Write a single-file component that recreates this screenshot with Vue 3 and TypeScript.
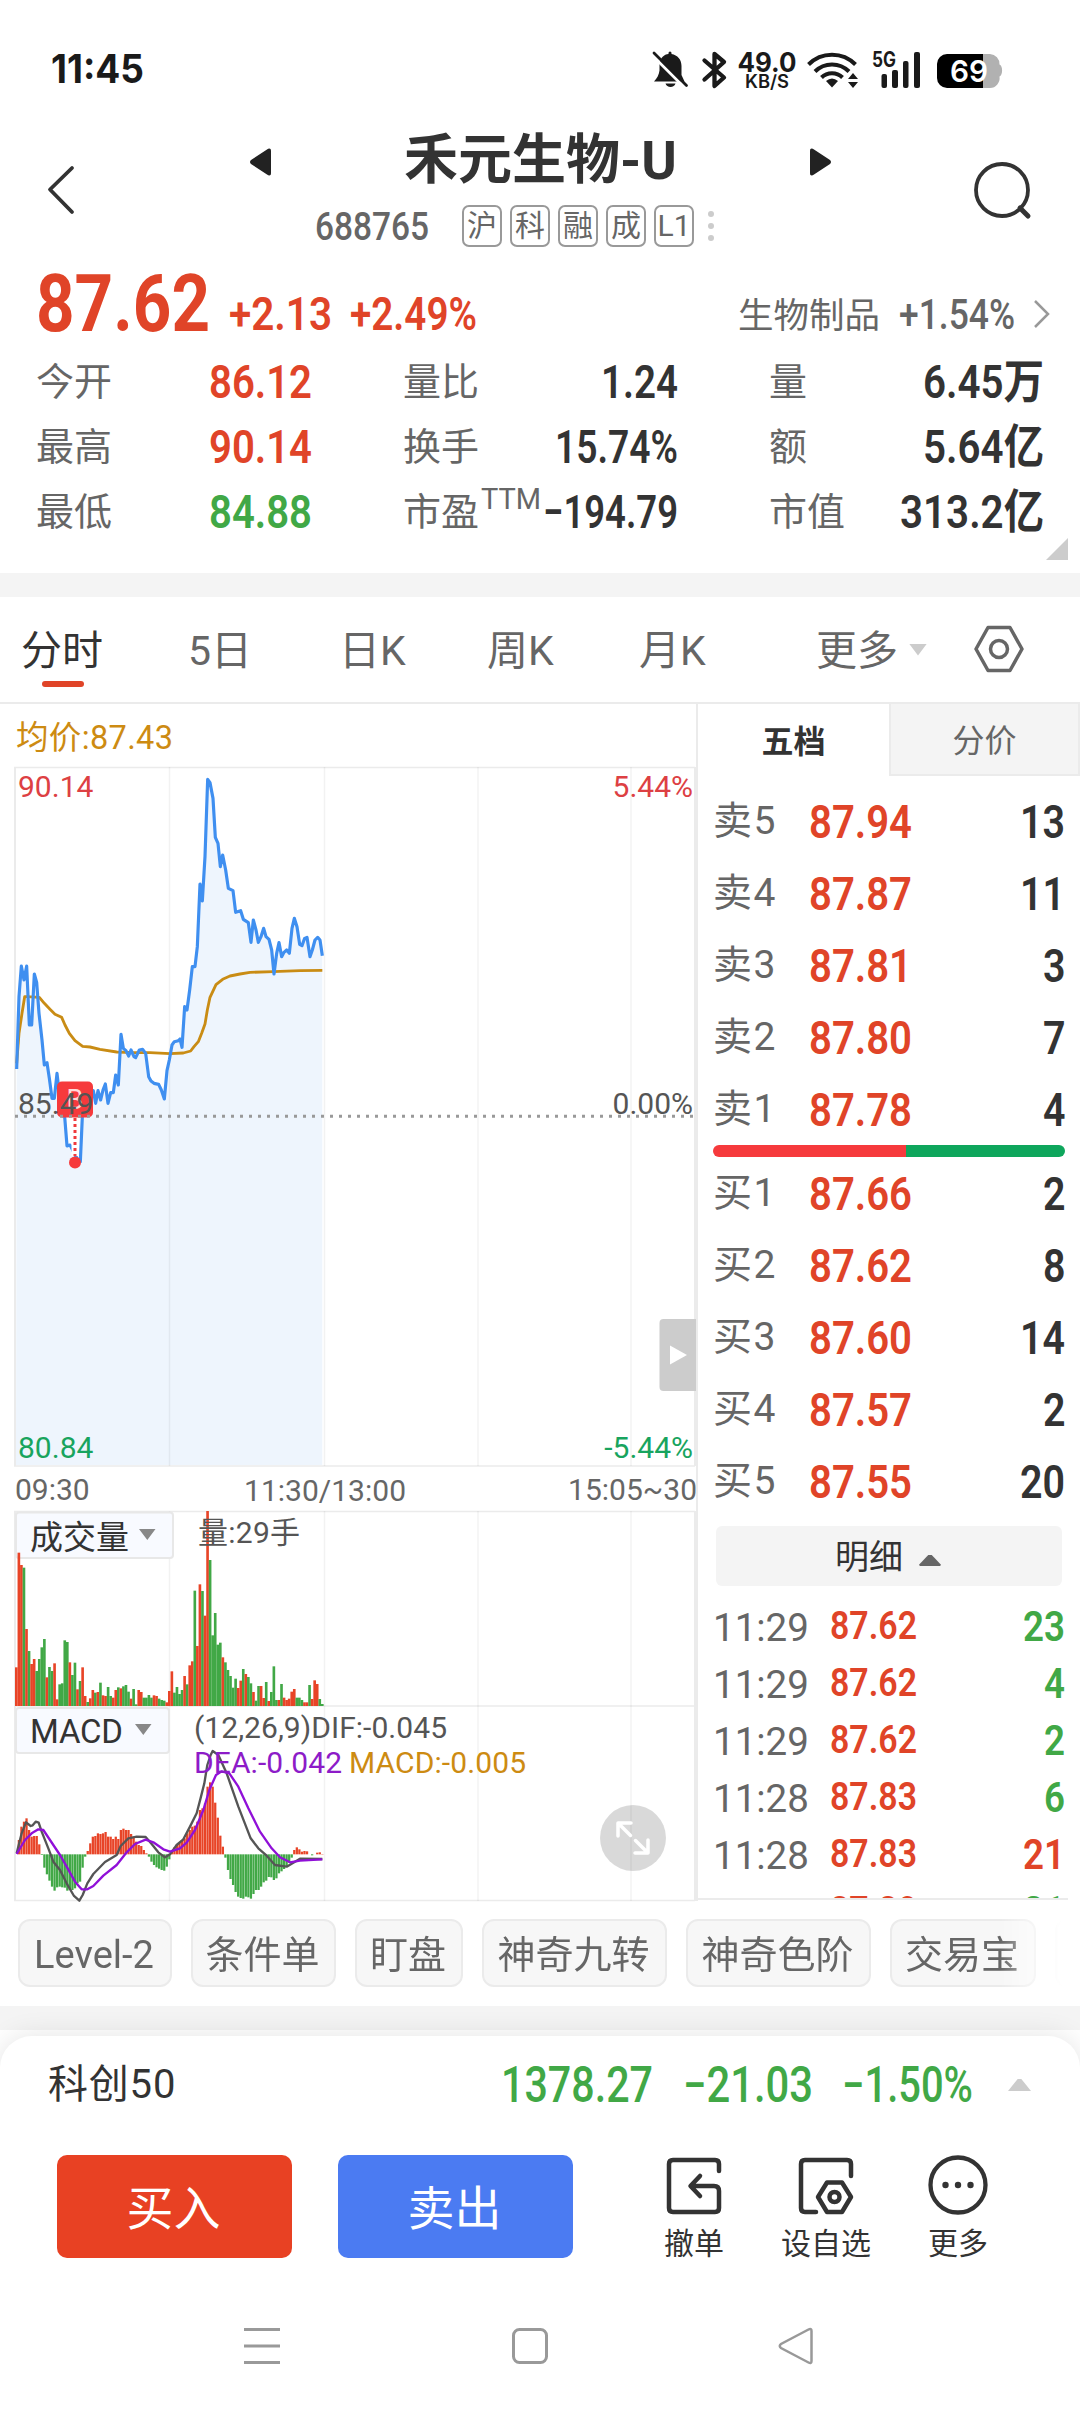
<script setup lang="ts">
import { defineComponent, h } from 'vue'

// Condensed figure: the text is fitted to a fixed width, its box is exactly one cap-height tall.
const Fig = defineComponent({
  props: {
    t: { type: String, required: true },
    w: { type: Number, required: true },
    cap: { type: Number, default: 33 },
    weight: { type: Number, default: 600 },
  },
  setup(p) {
    return () =>
      h('svg', { width: p.w, height: p.cap, style: 'overflow:visible;flex:none;display:block' }, [
        h('text', {
          x: 0, y: p.cap, fill: 'currentColor', textLength: p.w, lengthAdjust: 'spacingAndGlyphs',
          'font-size': p.cap / 0.711, 'font-weight': p.weight,
        }, p.t),
      ])
  },
})

const tags = ['沪', '科', '融', '成', 'L1']

interface Stat { k: string; v: string; w: number; c?: string; sup?: string }
const stats: Stat[] = [
  { k: '今开', v: '86.12', w: 103, c: 'up' }, { k: '量比', v: '1.24', w: 77 }, { k: '量', v: '6.45万', w: 121 },
  { k: '最高', v: '90.14', w: 103, c: 'up' }, { k: '换手', v: '15.74%', w: 123 }, { k: '额', v: '5.64亿', w: 121 },
  { k: '最低', v: '84.88', w: 103, c: 'down' }, { k: '市盈', v: '−194.79', w: 135, sup: 'TTM' }, { k: '市值', v: '313.2亿', w: 144 },
]

const tabs = ['分时', '5日', '日K', '周K', '月K']

const asks = [['卖5', '87.94', '13'], ['卖4', '87.87', '11'], ['卖3', '87.81', '3'], ['卖2', '87.80', '7'], ['卖1', '87.78', '4']]
const bids = [['买1', '87.66', '2'], ['买2', '87.62', '8'], ['买3', '87.60', '14'], ['买4', '87.57', '2'], ['买5', '87.55', '20']]
const trades = [
  ['11:29', '87.62', '23', 'down'], ['11:29', '87.62', '4', 'down'], ['11:29', '87.62', '2', 'down'],
  ['11:28', '87.83', '6', 'down'], ['11:28', '87.83', '21', 'up'], ['11:28', '87.80', '21', 'down'],
]
const chips = [['Level-2', 154], ['条件单', 145], ['盯盘', 108], ['神奇九转', 185], ['神奇色阶', 185], ['交易宝', 146], ['', 108]] as [string, number][]

// Chart series are kept on a grid of three units per pixel.
const price = '50,957 57,740 64,648 72,690 80,648 88,825 95,825 103,672 110,697 117,790 126,870 133,945 141,938 148,985 156,1045 163,1045 171,970 178,1030 186,1040 194,1100 201,1188 210,1185 218,1200 225,1215 238,1235 241,1235 247,1100 255,1060 263,1070 272,1040 280,1022 287,1060 294,1022 302,1050 309,1020 316,1002 324,1060 332,1028 340,1028 347,975 355,1005 363,853 370,895 378,902 386,918 393,900 402,920 407,923 418,900 428,898 437,910 446,980 453,993 462,1000 476,1003 484,1020 493,1047 501,962 508,930 516,885 523,875 535,872 540,867 546,892 554,770 561,780 569,720 577,650 585,650 592,590 600,402 607,453 615,320 623,88 630,98 639,145 646,262 654,280 661,350 668,315 677,360 685,415 699,422 707,487 722,482 730,508 745,518 753,577 760,510 768,540 775,577 783,560 791,535 798,560 807,568 815,600 822,672 830,610 837,578 845,620 852,607 860,600 868,610 876,535 883,505 891,530 899,583 906,587 914,565 921,562 930,620 937,600 945,570 953,562 960,570 967,617'
const avg = '50,940 57,850 66,790 74,740 80,740 118,742 133,760 150,778 165,793 185,802 195,825 208,850 225,872 248,889 270,891 300,898 350,906 400,908 450,908 510,911 550,909 572,903 582,890 595,875 605,850 615,822 622,780 630,742 648,704 668,688 690,678 720,672 750,667 820,665 900,662 967,661'
const dif = 'M50,1240 L65,1180 L78,1147 L92,1158 L98,1156 L107,1145 L116,1148 L125,1175 L145,1225 L160,1265 L180,1290 L200,1330 L222,1368 L238,1382 L248,1365 L262,1330 L280,1302 L315,1266 L350,1245 L362,1218 L385,1195 L410,1190 L437,1191 L455,1212 L475,1237 L495,1252 L510,1243 L530,1215 L550,1198 L570,1160 L590,1120 L603,1070 L613,1030 L622,975 L632,945 L638,933 L655,945 L680,1000 L715,1100 L752,1195 L775,1225 L800,1247 L825,1275 L860,1280 L880,1268 L900,1256 L967,1257'
const dea = 'M50,1242 L75,1200 L95,1180 L115,1168 L130,1170 L150,1200 L180,1245 L200,1280 L225,1325 L245,1348 L262,1348 L280,1338 L310,1307 L350,1275 L380,1237 L405,1212 L437,1199 L460,1207 L490,1228 L510,1235 L540,1225 L560,1208 L585,1170 L610,1110 L628,1050 L648,1005 L665,994 L688,1000 L715,1040 L745,1105 L780,1175 L815,1225 L840,1252 L870,1267 L900,1262 L967,1258'

const volRaw = 'r682 r338 r375 g383 r567 g633 r672 r657 g693 g657 g622 g597 r712 g681 g693 r670 r778 g733 g730 g601 g606 r667 g705 g668 r748 g723 r682 r768 g786 r775 r750 g758 r756 g728 r766 r768 g741 g768 r773 r750 g742 r745 g739 g735 g755 r776 g747 g793 r750 r756 g773 g773 g765 g773 r766 r768 g776 g780 g782 r787 r753 r694 g758 g741 g762 g750 r708 g733 r676 r664 g452 r618 r433 g453 r527 r213 g360 g586 g519 g614 g608 r652 g667 g690 g708 g743 g716 r744 r722 g687 r702 g711 g730 r756 g782 g738 r738 r774 g726 r783 g756 g679 g780 r780 g732 r773 r780 r776 r755 r747 g773 g773 g780 r787 r787 g735 r777 r721 r732 g777 g792'
const vol = volRaw.split(' ').map((s, i) => ({ x: 45 + i * 7.65, y: Number(s.slice(1)), up: s[0] === 'r' }))

const macdTops = [1243, 1200, 1160, 1145, 1135, 1170, 1190, 1188, 1188, 1213, 1245, 1283, 1303, 1322, 1340, 1352, 1342, 1340, 1342, 1343, 1352, 1350, 1350, 1345, 1330, 1325, 1283, 1250, 1233, 1210, 1190, 1188, 1180, 1182, 1180, 1176, 1190, 1190, 1197, 1190, 1197, 1170, 1166, 1170, 1170, 1182, 1190, 1205, 1215, 1218, 1230, 1240, 1250, 1265, 1275, 1282, 1286, 1290, 1292, 1280, 1258, 1235, 1222, 1213, 1208, 1200, 1195, 1180, 1170, 1160, 1157, 1145, 1110, 1105, 1090, 1040, 1027, 1040, 1088, 1133, 1187, 1220, 1253, 1290, 1317, 1335, 1356, 1370, 1374, 1376, 1370, 1372, 1376, 1362, 1350, 1350, 1340, 1327, 1322, 1311, 1312, 1320, 1315, 1300, 1294, 1287, 1280, 1268, 1253, 1230, 1222, 1228, 1235, 1233, 1234, 1243, 1246, 1243, 1238, 1237, 1242]
const macd = macdTops.map((t, i) => ({ x: 45.6 + i * 7.65, y: Math.min(t, 1243), hgt: Math.abs(t - 1243), up: t < 1243 }))
const vlines = [169.5, 324.5, 478, 631]
</script>

<template>
  <div class="screen">
    <div class="status">
      <Fig class="clock" t="11:45" :w="93" :cap="28" :weight="700" />
      <svg class="sys" width="380" height="60" viewBox="640 40 380 60">
        <g fill="#1a1a1a">
          <path d="M659.500 64C660.500 57.500 664 54.500 668.500 54V53a1.500 1.500 0 0 1 3 0v1c6 1 10 5.500 10 12v9l3 6.500H654c3-3 5-7 5.500-11z" />
          <path d="M665.500 83.500h10c-1 4.500-9 4.500-10 0z" />
        </g>
        <path d="M651.500 54.500L684.500 87.500" stroke="#fff" stroke-width="3" />
        <path d="M654 53L686.500 85.500" stroke="#1a1a1a" stroke-width="2.800" stroke-linecap="round" />
        <path d="M704.500 60.500l19.500 17-9.500 8.500v-32l9.500 8-19.500 17.500" fill="none" stroke="#1a1a1a" stroke-width="4.300" stroke-linejoin="round" stroke-linecap="round" />
        <g fill="#1a1a1a" font-family="Inter, sans-serif" font-weight="700">
          <text x="737.500" y="71.500" font-size="27" textLength="59" lengthAdjust="spacingAndGlyphs">49.0</text>
          <text x="745" y="87.500" font-size="18" font-weight="600" textLength="44" lengthAdjust="spacingAndGlyphs">KB/S</text>
          <text x="872" y="66.500" font-size="21" textLength="24" lengthAdjust="spacingAndGlyphs">5G</text>
        </g>
        <g fill="none" stroke="#1a1a1a" stroke-width="4">
          <path d="M808.500 64.500a33 33 0 0 1 47 0" /><path d="M815 71.500a24 24 0 0 1 34 0" /><path d="M821.500 77.500a15 15 0 0 1 21 0" />
        </g>
        <path d="M832 87.500l-6-6.500q6-5 12 0z" fill="#1a1a1a" />
        <path d="M853 73l5 6h-10zM853 88l5-6h-10z" fill="#1a1a1a" />
        <g fill="#1a1a1a">
          <rect x="881.500" y="74" width="5.500" height="14" rx="2" /><rect x="892" y="70" width="6" height="18" rx="2" />
          <rect x="903" y="61" width="5.500" height="27" rx="2" /><rect x="914" y="52" width="6" height="36" rx="2" />
        </g>
        <path d="M983 54h7a10 10 0 0 1 9.500 10.500c3.500 1 3.500 11 0 12A10 10 0 0 1 990 88h-7z" fill="#b1b1b1" />
        <path d="M983 54h-36a10 10 0 0 0-10 10v14a10 10 0 0 0 10 10h36z" fill="#000" />
        <text x="950" y="82" fill="#fff" font-family="Inter, sans-serif" font-weight="600" font-size="30" textLength="38" lengthAdjust="spacingAndGlyphs">69</text>
      </svg>
    </div>

    <header class="head">
      <svg class="back" width="32" height="54" viewBox="0 0 32 54"><path d="M28 5L6 26.500L28 49" fill="none" stroke="#333" stroke-width="3.800" stroke-linejoin="round" stroke-linecap="round" /></svg>
      <div class="names">
        <div class="title-row">
          <svg width="22" height="28" viewBox="0 0 22 28"><path d="M22 3v22c0 3-2 3-4 1.500L2 16q-2-2 0-4L18 1.500c2-1.500 4-1.500 4 1.500z" fill="#222" /></svg>
          <h1>禾元生物-U</h1>
          <svg width="22" height="28" viewBox="0 0 22 28"><path d="M0 3v22c0 3 2 3 4 1.500L20 16q2-2 0-4L4 1.500c-2-1.500-4-1.500-4 1.500z" fill="#222" /></svg>
        </div>
        <div class="code-row">
          <Fig t="688765" :w="114" :cap="27.5" :weight="500" />
          <div class="tags"><span v-for="t in tags" :key="t">{{ t }}</span></div>
          <i class="dots"><b /><b /><b /></i>
        </div>
      </div>
      <svg class="search" width="62" height="62" viewBox="0 0 62 62" fill="none" stroke="#333"><circle cx="30" cy="30" r="26" stroke-width="3.800" /><path d="M48 48l8 8" stroke-width="5" stroke-linecap="round" /></svg>
    </header>

    <section class="quote">
      <div class="price-row">
        <Fig class="up" t="87.62" :w="174" :cap="57" :weight="700" />
        <Fig class="up chg" t="+2.13" :w="103" :cap="33" />
        <Fig class="up pct" t="+2.49%" :w="127" :cap="33" />
        <span class="sector">生物制品</span>
        <Fig class="sector-pct" t="+1.54%" :w="116" :cap="30" :weight="500" />
        <svg width="18" height="28" viewBox="0 0 18 28"><path d="M2 1l13 13L2 27" fill="none" stroke="#999" stroke-width="2.500" /></svg>
      </div>
      <div class="stats">
        <div v-for="s in stats" :key="s.k" class="stat">
          <span class="k">{{ s.k }}<sup v-if="s.sup">{{ s.sup }}</sup></span>
          <Fig :class="s.c" :t="s.v" :w="s.w" />
        </div>
      </div>
      <i class="corner" />
    </section>

    <nav class="tabs">
      <span v-for="(t, i) in tabs" :key="t" :class="{ on: i === 0 }">{{ t }}</span>
      <span class="more">更多</span>
      <i class="tri-down" />
      <svg width="50" height="48" viewBox="0 0 50 48" fill="none" stroke="#666" stroke-width="3.500" stroke-linejoin="round"><path d="M14 2.500h22L48 24L36 45.500H14L2 24z" /><circle cx="25" cy="24" r="8.500" /></svg>
    </nav>

    <main class="market">
      <div class="chart">
        <svg width="696" height="1198" viewBox="0 704 696 1198">
          <text x="16" y="748.500" font-size="32.500" fill="#cd8b12" textLength="157">均价:87.43</text>
          <g transform="translate(0 750) scale(.33333)">
            <polygon :points="`48,2145 ${price} 967,2145`" fill="#eef5fd" />
          </g>
          <g stroke="#ebebeb" stroke-width="2" fill="none">
            <path d="M14 767.500H695M14 1466H695M14 1511.500H695M14 1706H695M14 1900.500H695" stroke-width="1.500" />
            <path d="M15 767V1466M15 1511V1901M695 767V1466M695 1511V1901" />
            <path v-for="x in vlines" :key="x" :d="`M${x} 767V1466M${x} 1511V1901`" stroke="#000" stroke-opacity=".05" stroke-width="1.500" />
          </g>
          <g transform="translate(0 750) scale(.33333)" fill="none" stroke-linejoin="round">
            <polyline :points="avg" stroke="#c98c14" stroke-width="8.500" />
            <polyline :points="price" stroke="#3f8ff0" stroke-width="9.500" />
          </g>
          <rect x="57" y="1081.500" width="36" height="36" rx="5" fill="#f63a3c" />
          <text x="75" y="1109" font-size="27" fill="#ffd9d9" text-anchor="middle">B</text>
          <path d="M75 1118V1156" stroke="#fff" stroke-width="7" /><path d="M75 1118V1156" stroke="#f03a3c" stroke-width="3" stroke-dasharray="3 3" />
          <circle cx="75" cy="1162.500" r="6" fill="#f63a3c" />
          <path d="M15 1116.300H693" stroke="#999" stroke-width="3" stroke-dasharray="3 6" />
          <g font-size="30">
            <g fill="#dd4043"><text x="18" y="797">90.14</text><text x="693" y="797" text-anchor="end">5.44%</text></g>
            <g fill="#555"><text x="18" y="1114">85.49</text><text x="693" y="1114" text-anchor="end">0.00%</text></g>
            <g fill="#18a45e"><text x="18" y="1457.500">80.84</text><text x="693" y="1457.500" text-anchor="end">-5.44%</text></g>
            <g fill="#666"><text x="15" y="1500">09:30</text><text x="244" y="1501" textLength="162">11:30/13:00</text><text x="697" y="1500" text-anchor="end" textLength="129">15:05~30</text></g>
          </g>
          <path d="M659.500 1323a4 4 0 0 1 4-4H696v72h-32.500a4 4 0 0 1-4-4z" fill="#ccc" />
          <path d="M670 1345.500v19l17-9.500z" fill="#fff" />

          <g stroke="#e8e8e8" stroke-width="2" fill="#f8faff"><rect x="16" y="1512.500" width="157" height="45.500" rx="3" /><rect x="16" y="1708" width="153" height="45" rx="3" /></g>
          <path d="M139 1529h16.500l-8.200 11zM135 1724h16.500l-8.200 11z" fill="#888" />
          <text x="30" y="1549" font-size="33" fill="#333">成交量</text>
          <text x="30" y="1743" font-size="33" fill="#333" textLength="93">MACD</text>
          <g transform="translate(0 1440) scale(.33333)">
            <rect v-for="(b, i) in vol" :key="'v' + i" :x="b.x" :y="b.y" width="7.900" :height="798 - b.y" :fill="b.up ? '#e84427' : '#41a846'" />
            <rect v-for="(b, i) in macd" :key="'m' + i" :x="b.x" :y="b.y" width="6.800" :height="b.hgt" :fill="b.up ? '#e84427' : '#41a846'" />
            <path :d="dif" fill="none" stroke="#555" stroke-width="7" stroke-linejoin="round" />
            <path :d="dea" fill="none" stroke="#9010d8" stroke-width="7" stroke-linejoin="round" />
          </g>
          <g font-size="30">
            <text x="198" y="1543" fill="#555" textLength="102">量:29手</text>
            <text x="194" y="1737.700" fill="#555" textLength="253">(12,26,9)DIF:-0.045</text>
            <text x="194" y="1772.700" fill="#8d1bc8" textLength="148">DEA:-0.042</text>
            <text x="349" y="1772.700" fill="#cd8b12" textLength="177">MACD:-0.005</text>
          </g>
          <circle cx="633" cy="1838" r="33" fill="#000" fill-opacity=".15" />
          <path d="M631 1823h-13v13M618.500 1823.500l12 12M635 1853h13v-13M647.500 1852.500l-12-12" fill="none" stroke="#fff" stroke-width="3.500" stroke-linecap="round" stroke-linejoin="round" />
        </svg>
      </div>

      <aside class="book">
        <div class="book-tabs"><b>五档</b><span>分价</span></div>
        <div class="levels">
          <div v-for="r in asks" :key="r[0]" class="lv"><span>{{ r[0] }}</span><Fig class="up" :t="r[1]" :w="103" /><Fig class="q" :t="r[2]" :w="r[2].length * 22.500" /></div>
        </div>
        <div class="ratio"><i /><i /></div>
        <div class="levels">
          <div v-for="r in bids" :key="r[0]" class="lv"><span>{{ r[0] }}</span><Fig class="up" :t="r[1]" :w="103" /><Fig class="q" :t="r[2]" :w="r[2].length * 22.500" /></div>
        </div>
        <div class="detail">明细<i /></div>
        <div class="trades">
          <div v-for="(r, i) in trades" :key="i" class="tr"><span>{{ r[0] }}</span><Fig class="up" :t="r[1]" :w="87" :cap="28" /><Fig class="q" :class="r[3]" :t="r[2]" :w="r[2].length * 21" :cap="30" /></div>
        </div>
      </aside>
    </main>

    <div class="chips">
      <span v-for="c in chips" :key="c[0]" :style="{ width: c[1] + 'px' }">{{ c[0] }}</span>
    </div>
    <div class="band" />

    <footer class="sheet">
      <div class="index">
        <span>科创50</span>
        <Fig t="1378.27" :w="152" :cap="35" :weight="500" /><Fig class="i2" t="−21.03" :w="130" :cap="35" :weight="500" /><Fig class="i3" t="−1.50%" :w="131" :cap="35" :weight="500" />
        <i />
      </div>
      <div class="actions">
        <button class="buy">买入</button>
        <button class="sell">卖出</button>
        <div class="act a1">
          <svg width="60" height="60" viewBox="0 0 60 60" fill="none" stroke="#333" stroke-width="4.500" stroke-linecap="round" stroke-linejoin="round"><path d="M55 16V9q0-4-4-4H9q-4 0-4 4v44q0 4 4 4h42q4 0 4-4V36q0-5-5-5H27M36 21L26.500 31L36 41" /></svg>
          <span>撤单</span>
        </div>
        <div class="act a2">
          <svg width="60" height="60" viewBox="0 0 60 60" fill="none" stroke="#333" stroke-width="4.500" stroke-linecap="round" stroke-linejoin="round"><path d="M55 21V9q0-4-4-4H9q-4 0-4 4v44q0 4 4 4h11M31 27.500h15l9 14.500-9 15H31l-9-15z" /><circle cx="38.500" cy="42" r="5" /></svg>
          <span>设自选</span>
        </div>
        <div class="act a3">
          <svg width="60" height="60" viewBox="0 0 60 60"><circle cx="30" cy="30" r="27.500" fill="none" stroke="#333" stroke-width="4.300" /><g fill="#333"><circle cx="17.500" cy="30" r="3.200" /><circle cx="30" cy="30" r="3.200" /><circle cx="42.500" cy="30" r="3.200" /></g></svg>
          <span>更多</span>
        </div>
      </div>
      <div class="sysnav">
        <svg width="38" height="38" viewBox="0 0 38 38" stroke="#999" stroke-width="3"><path d="M1 2.500h36M1 19h36M1 35.500h36" /></svg>
        <svg width="38" height="38" viewBox="0 0 38 38"><rect x="2.500" y="2.500" width="33" height="33" rx="6" fill="none" stroke="#999" stroke-width="3" /></svg>
        <svg width="36" height="38" viewBox="0 0 36 38"><path d="M33.500 4v30q0 3-3 1.500L3 21q-2.500-2 0-4L30.500 2.500q3-1.500 3 1.500z" fill="none" stroke="#999" stroke-width="2.500" /></svg>
      </div>
    </footer>
  </div>
</template>

<style>
body { background: #fff; }
</style>

<style scoped>
* { box-sizing: border-box; }
.screen { width: 1080px; height: 2412px; overflow: hidden; background: #fff; color: #333; font-family: Roboto, "Noto Sans CJK SC", sans-serif; display: flex; flex-direction: column; }
.screen > * { flex: none; }
svg { flex: none; display: block; }
.up { color: #e04428; }
.down { color: #41a846; }

.status { height: 100px; padding: 40px 0 0 51px; display: flex; }
.clock { font-family: Inter, sans-serif; color: #1a1a1a; margin-top: 15px; }
.sys { margin-left: 496px; }

.head { height: 150px; display: flex; }
.back { margin: 63px 0 0 44px; }
.names { width: 583px; margin-left: 173px; }
.title-row { height: 100px; padding-top: 20px; display: flex; justify-content: space-between; }
.title-row svg { margin-top: 28px; }
.title-row h1 { margin: 0; font-size: 54px; line-height: 82px; font-weight: 700; white-space: nowrap; }
.code-row { height: 50px; display: flex; align-items: center; padding: 1px 0 0 66px; color: #666; }
.tags { display: flex; gap: 8px; margin-left: 33px; }
.tags span { width: 40px; height: 42px; border: 2px solid #999; border-radius: 7px; font-size: 30px; line-height: 38px; display: flex; justify-content: center; }
.dots { display: flex; flex-direction: column; gap: 6px; margin-left: 14px; }
.dots b { width: 6px; height: 6px; border-radius: 3px; background: #ccc; }
.search { margin: 60px 0 0 140px; }

.quote { height: 347px; position: relative; border-bottom: 24px solid #f4f4f4; }
.price-row { height: 81px; padding-left: 36px; display: flex; align-items: flex-end; }
.chg { margin: 0 0 1.5px 19px; }
.pct { margin: 0 0 1.5px 18px; }
.sector { margin-left: 261px; width: 142px; font-size: 35.500px; line-height: 36px; margin-bottom: -3px; color: #666; white-space: nowrap; }
.sector-pct { color: #666; margin: 0 0 2px 19px; }
.price-row > svg:last-child { margin: 0 0 3px 18px; }
.stats { padding: 18px 0 0 36px; display: grid; grid-template-columns: 276px 366px 366px; grid-auto-rows: 65px; }
.stat { display: flex; align-items: center; justify-content: space-between; }
.stat > svg { margin-top: -1px; }
.stat:nth-child(3n+2) { padding: 0 0 0 91px; }
.stat:nth-child(3n) { padding: 0 0 0 91px; }
.k { font-size: 38px; line-height: 50px; color: #666; white-space: nowrap; display: flex; }
.k sup { font-size: 29px; line-height: 28px; margin-top: -2px; margin-left: 2px; width: 0; vertical-align: baseline; }
.corner { position: absolute; right: 12px; bottom: 13px; width: 22px; height: 22px; background: #ccc; clip-path: polygon(100% 0, 100% 100%, 0 100%); }

.tabs { height: 107px; border-bottom: 2px solid #ebebeb; display: flex; align-items: center; color: #666; font-size: 41px; padding-left: 21px; }
.tabs span { height: 105px; line-height: 109px; white-space: nowrap; position: relative; }
.tabs span:nth-child(1) { width: 167px; color: #333; }
.tabs span:nth-child(2) { width: 151px; }
.tabs span:nth-child(3) { width: 148px; }
.tabs span:nth-child(4) { width: 152px; }
.tabs span:nth-child(5) { width: 177px; }
.tabs .on::after { content: ""; position: absolute; left: 21px; top: 84px; width: 42px; height: 6px; border-radius: 3px; background: #e04428; }
.tri-down { width: 18px; height: 12px; margin-left: 11px; background: #ccc; clip-path: polygon(0 0, 100% 0, 50% 100%); }
.tabs svg { margin: -1px 0 0 47px; }

.market { height: 1197px; display: flex; }
.chart { width: 696px; height: 1197px; }
.book { width: 384px; height: 1197px; border-left: 2px solid #ebebeb; }
.book-tabs { height: 73px; display: flex; font-size: 32px; }
.book-tabs b, .book-tabs span { width: 191px; height: 72px; line-height: 77px; text-align: center; }
.book-tabs span { background: #f4f4f4; border: 2px solid #ebebeb; border-top: 0; line-height: 75px; color: #666; }
.levels { padding: 8px 0 0 15px; }
.ratio + .levels { padding-top: 0; }
.lv { height: 72px; display: flex; align-items: center; width: 352px; font-size: 39px; color: #666; }
.lv span { width: 96px; line-height: 50px; letter-spacing: 1.500px; }
.lv .up { color: #e04428; }
.q { margin-left: auto; }
.lv .q { color: #333; }
.ratio { height: 12px; width: 352px; margin: 0 0 0 15px; border-radius: 6px; overflow: hidden; display: flex; }
.ratio i { width: 193px; background: #f63a3c; }
.ratio i + i { width: 159px; background: #0ea65c; }
.detail { width: 346px; height: 60px; margin: 9px 0 0 18px; background: #f4f4f4; border-radius: 6px; display: flex; align-items: center; padding: 2px 0 0 119px; font-size: 34px; line-height: 58px; }
.detail i { width: 22px; height: 12px; margin: 6px 0 0 16px; background: #666; clip-path: polygon(42% 8%, 58% 8%, 100% 90%, 96% 100%, 4% 100%, 0 90%); }
.trades { height: 314px; padding-top: 10.5px; overflow: hidden; width: 370px; padding-left: 15px; border-bottom: 2px solid #ebebeb; }
.tr { height: 57px; display: flex; align-items: center; width: 352px; font-size: 38.500px; color: #666; }
.tr > .q { margin-top: 1px; }
.tr span { width: 117px; line-height: 50px; padding-top: 5px; }

.chips { height: 105px; padding: 18px 0 0 18px; display: flex; gap: 19px; width: 1062px; overflow: hidden; -webkit-mask-image: linear-gradient(90deg, #000 1000px, transparent 1062px); mask-image: linear-gradient(90deg, #000 1000px, transparent 1062px); }
.chips span { flex: none; height: 68px; border: 2px solid #ebebeb; border-radius: 12px; background: #f7f7f7; font-size: 38px; line-height: 68px; color: #666; text-align: center; white-space: nowrap; text-indent: -2px; }
.band { height: 24px; background: #f4f4f4; }

.sheet { margin-top: 6px; height: 376px; border-radius: 32px 32px 0 0; background: #fff; box-shadow: 0 0 28px rgba(0, 0, 0, .11); position: relative; }
.index { height: 98px; padding: 0 0 0 48px; display: flex; align-items: center; color: #41a846; }
.index span { font-size: 40px; color: #333; width: 453px; letter-spacing: .8px; line-height: 50px; margin-top: -1px; }
.index svg { margin-top: -2px; }
.i2 { margin-left: 30px; }
.i3 { margin-left: 29px; }
.index i { width: 23px; height: 12px; margin-left: 35px; background: #ccc; clip-path: polygon(42% 0, 58% 0, 100% 100%, 0 100%); }
.actions { display: flex; padding: 21px 0 0 57px; height: 170px; }
button { width: 235px; height: 103px; border: 0; border-radius: 10px; color: #fff; font: 400 47px/100px Roboto, "Noto Sans CJK SC", sans-serif; padding: 4px 0 0; text-indent: -2px; overflow: hidden; }
.buy { background: #e84123; }
.sell { background: #4b7bf2; margin-left: 46px; }
.act { display: flex; flex-direction: column; align-items: center; width: 100px; font-size: 30px; line-height: 40px; white-space: nowrap; }
.act svg { margin-top: 0; }
.act span { margin-top: 9px; }
.a1 { margin-left: 71px; }
.a2 { margin-left: 32px; }
.a3 { margin-left: 32px; }
.sysnav { display: flex; padding: 23px 0 0 243px; }
.sysnav svg + svg { margin-left: 230px; }
.sysnav svg:last-child { margin-left: 229px; }
</style>
